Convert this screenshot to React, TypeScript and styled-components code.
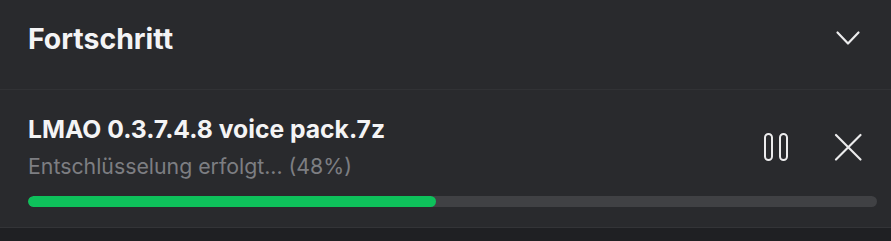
import React from "react";
import styled, { createGlobalStyle } from "styled-components";

const Global = createGlobalStyle`
  html, body { margin: 0; padding: 0; background: #1f2023; }
  body { font-family: Inter, "Noto Sans", sans-serif; -webkit-font-smoothing: antialiased; }
  * { box-sizing: border-box; }
`;

const Panel = styled.div`
  width: 891px;
  background: #292a2d;
`;

const Header = styled.div`
  height: 90px;
  padding: 21px 27px 0 28px;
  display: flex;
  align-items: flex-start;
  justify-content: space-between;
  border-bottom: 1px solid #313235;
`;

const HeaderTitle = styled.h2`
  margin: 0;
  font-size: 28.4px;
  line-height: 36px;
  font-weight: 700;
  color: #f4f4f5;
`;

const IconButton = styled.button`
  width: 32px;
  height: 32px;
  padding: 0;
  border: 0;
  background: transparent;
  color: #ececed;
  display: flex;
  align-items: center;
  justify-content: center;
  cursor: pointer;
`;

const HeaderButton = styled(IconButton)`
  margin-top: 1px;
`;

const Item = styled.div`
  padding: 24px 14px 20px 28px;
  border-bottom: 1px solid #333437;
`;

const ItemTop = styled.div`
  display: flex;
  align-items: center;
  justify-content: space-between;
`;

const TextCol = styled.div`
  display: flex;
  flex-direction: column;
  gap: 8px;
`;

const FileName = styled.div`
  font-size: 24.7px;
  line-height: 30px;
  font-weight: 700;
  color: #f4f4f5;
`;

const Status = styled.div`
  font-size: 21.3px;
  line-height: 28px;
  font-weight: 400;
  color: #7d7e82;
`;

const Actions = styled.div`
  display: flex;
  gap: 40px;
  margin-right: 13px;
`;

const Track = styled.div`
  margin-top: 16px;
  height: 11px;
  border-radius: 6px;
  background: #404144;
  overflow: hidden;
`;

const Fill = styled.div`
  height: 100%;
  border-radius: 6px;
  background: #0ec15b;
`;

const Footer = styled.div`
  height: 14px;
  background: #1f2023;
`;

const progress = 48;

export default function App() {
  return (
    <>
      <Global />
      <Panel>
        <Header>
          <HeaderTitle>Fortschritt</HeaderTitle>
          <HeaderButton aria-label="Einklappen">
            <svg width="32" height="32" viewBox="0 0 32 32" fill="none" stroke="currentColor" strokeWidth="2.2" strokeLinecap="round" strokeLinejoin="round">
              <polyline points="5.5,10.5 16,21.5 26.5,10.5" />
            </svg>
          </HeaderButton>
        </Header>
        <Item>
          <ItemTop>
            <TextCol>
              <FileName>LMAO 0.3.7.4.8 voice pack.7z</FileName>
              <Status>Entschlüsselung erfolgt... ({progress}%)</Status>
            </TextCol>
            <Actions>
              <IconButton aria-label="Pause">
                <svg width="32" height="32" viewBox="0 0 32 32" fill="none" stroke="currentColor" strokeWidth="2">
                  <rect x="5" y="3" width="7" height="26" rx="3.5" />
                  <rect x="20" y="3" width="7" height="26" rx="3.5" />
                </svg>
              </IconButton>
              <IconButton aria-label="Abbrechen">
                <svg width="32" height="32" viewBox="0 0 32 32" fill="none" stroke="currentColor" strokeWidth="2.2" strokeLinecap="round">
                  <line x1="4" y1="4" x2="28.5" y2="28.5" />
                  <line x1="28.5" y1="4" x2="4" y2="28.5" />
                </svg>
              </IconButton>
            </Actions>
          </ItemTop>
          <Track>
            <Fill style={{ width: `${progress}%` }} />
          </Track>
        </Item>
        <Footer />
      </Panel>
    </>
  );
}
